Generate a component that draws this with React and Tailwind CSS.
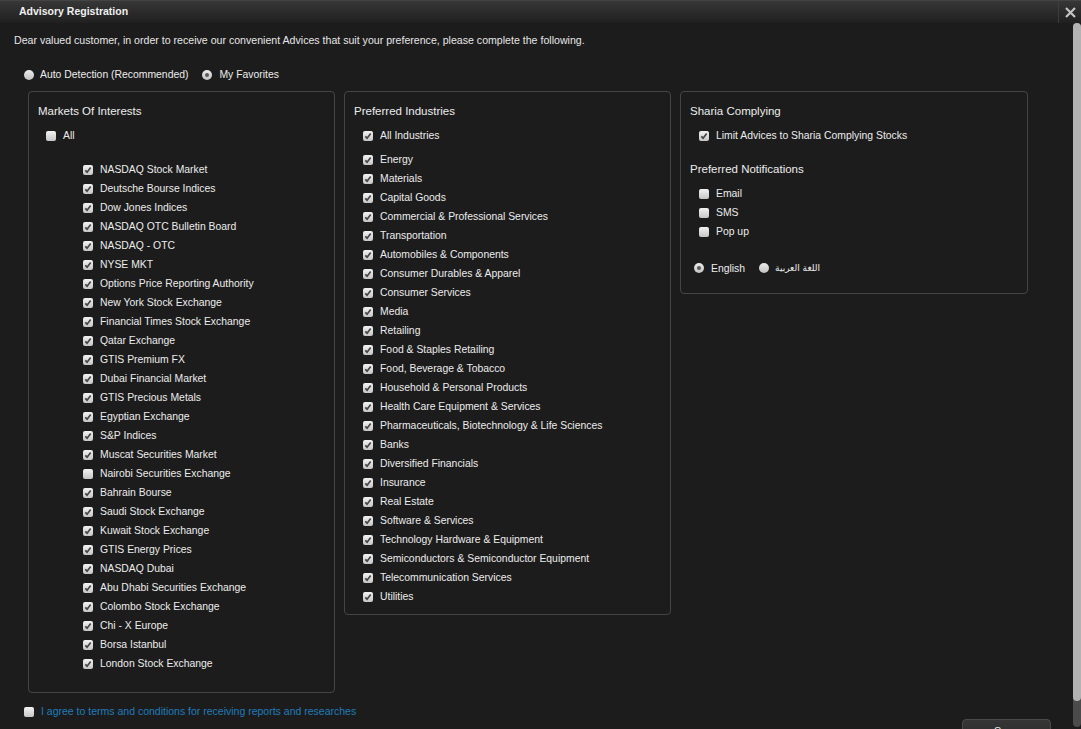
import React from 'react';

const markets = [
  ['NASDAQ Stock Market', true],
  ['Deutsche Bourse Indices', true],
  ['Dow Jones Indices', true],
  ['NASDAQ OTC Bulletin Board', true],
  ['NASDAQ - OTC', true],
  ['NYSE MKT', true],
  ['Options Price Reporting Authority', true],
  ['New York Stock Exchange', true],
  ['Financial Times Stock Exchange', true],
  ['Qatar Exchange', true],
  ['GTIS Premium FX', true],
  ['Dubai Financial Market', true],
  ['GTIS Precious Metals', true],
  ['Egyptian Exchange', true],
  ['S&P Indices', true],
  ['Muscat Securities Market', true],
  ['Nairobi Securities Exchange', false],
  ['Bahrain Bourse', true],
  ['Saudi Stock Exchange', true],
  ['Kuwait Stock Exchange', true],
  ['GTIS Energy Prices', true],
  ['NASDAQ Dubai', true],
  ['Abu Dhabi Securities Exchange', true],
  ['Colombo Stock Exchange', true],
  ['Chi - X Europe', true],
  ['Borsa Istanbul', true],
  ['London Stock Exchange', true],
];

const industries = [
  'Energy',
  'Materials',
  'Capital Goods',
  'Commercial & Professional Services',
  'Transportation',
  'Automobiles & Components',
  'Consumer Durables & Apparel',
  'Consumer Services',
  'Media',
  'Retailing',
  'Food & Staples Retailing',
  'Food, Beverage & Tobacco',
  'Household & Personal Products',
  'Health Care Equipment & Services',
  'Pharmaceuticals, Biotechnology & Life Sciences',
  'Banks',
  'Diversified Financials',
  'Insurance',
  'Real Estate',
  'Software & Services',
  'Technology Hardware & Equipment',
  'Semiconductors & Semiconductor Equipment',
  'Telecommunication Services',
  'Utilities',
];

const Check = ({ checked }) => (
  <span className="w-[10px] h-[10px] rounded-[2px] bg-linear-to-b from-[#f2f2f2] to-[#c6c6c6] flex items-center justify-center shrink-0">
    {checked && (
      <svg width="8" height="8" viewBox="0 0 8 8">
        <path d="M1.3 4.3 L3.1 6.2 L6.7 1.6" stroke="#454545" strokeWidth="1.7" fill="none" />
      </svg>
    )}
  </span>
);

const Radio = ({ checked }) => (
  <span className="w-[10px] h-[10px] rounded-full bg-linear-to-b from-[#ececec] to-[#c2c2c2] flex items-center justify-center shrink-0">
    {checked && <span className="w-[4px] h-[4px] rounded-full bg-[#5a5a5a]" />}
  </span>
);

const Row = ({ label, checked, className = '' }) => (
  <div className={`h-[19px] flex items-center gap-[7px] ${className}`}>
    <Check checked={checked} />
    <span className="text-[10.4px] text-[#ececec] whitespace-nowrap">{label}</span>
  </div>
);

const Title = ({ children, className = '' }) => (
  <div className={`h-[20px] flex items-center text-[11.5px] text-[#ececec] ${className}`}>{children}</div>
);

export default function App() {
  return (
    <div className="w-[1081px] h-[729px] overflow-hidden bg-[#1c1c1c] flex flex-col font-['Liberation_Sans',Arial,sans-serif]">
      {/* header */}
      <div className="h-[23px] shrink-0 flex items-center bg-linear-to-b from-[#373737] to-[#202020] border-t border-[#444]">
        <div className="flex-1 pl-[19px] text-[10.5px] font-bold text-[#f0f0f0]">Advisory Registration</div>
        <div className="w-[23px] h-full border-l border-[#3c3c3c] flex items-center justify-center">
          <svg width="11" height="11" viewBox="0 0 11 11">
            <path d="M1 1 L10 10 M10 1 L1 10" stroke="#c4c4c4" strokeWidth="2.2" />
          </svg>
        </div>
      </div>

      <div className="flex flex-1 min-h-0">
        <div className="flex-1 overflow-hidden pl-[14px] pt-[11px]">
          <p className="h-[14px] flex items-center text-[10.6px] text-[#e6e6e6] whitespace-nowrap">
            Dear valued customer, in order to receive our convenient Advices that suit your preference, please complete the following.
          </p>

          <div className="mt-[20px] ml-[10px] h-[14px] flex items-center text-[10.4px] text-[#ececec]">
            <Radio />
            <span className="ml-[6px]">Auto Detection (Recommended)</span>
            <span className="ml-[14px]"><Radio checked /></span>
            <span className="ml-[7px]">My Favorites</span>
          </div>

          <div className="mt-[9px] ml-[14px] flex items-start gap-[9px]">
            {/* markets */}
            <div className="w-[307px] border border-[#454545] rounded-[4px] px-[9px] pt-[10px] pb-[19px]">
              <Title>Markets Of Interests</Title>
              <Row label="All" checked={false} className="mt-[4px] ml-[8px]" />
              <div className="mt-[15px] ml-[45px]">
                {markets.map(([m, c]) => (
                  <Row key={m} label={m} checked={c} />
                ))}
              </div>
            </div>

            {/* industries */}
            <div className="w-[327px] border border-[#454545] rounded-[4px] px-[9px] pt-[10px] pb-[8px]">
              <Title>Preferred Industries</Title>
              <Row label="All Industries" checked className="mt-[4px] ml-[9px]" />
              <div className="mt-[5px] ml-[9px]">
                {industries.map((i) => (
                  <Row key={i} label={i} checked />
                ))}
              </div>
            </div>

            {/* sharia + notifications */}
            <div className="w-[348px] border border-[#454545] rounded-[4px] px-[9px] pt-[10px] pb-[16px]">
              <Title>Sharia Complying</Title>
              <Row label="Limit Advices to Sharia Complying Stocks" checked className="mt-[4px] ml-[9px]" />
              <Title className="mt-[15px]">Preferred Notifications</Title>
              <div className="mt-[4px] ml-[9px]">
                <Row label="Email" checked={false} />
                <Row label="SMS" checked={false} />
                <Row label="Pop up" checked={false} />
              </div>
              <div className="mt-[17px] ml-[4px] h-[19px] flex items-center text-[10.4px] text-[#ececec]">
                <Radio checked />
                <span className="ml-[7px] mt-[3px]">English</span>
                <span className="ml-[14px]"><Radio /></span>
                <span className="ml-[6px] mt-[2px] text-[9px] font-['DejaVu_Sans',sans-serif]" dir="rtl">اللغة العربية</span>
              </div>
            </div>
          </div>

          <div className="mt-[12px] ml-[10px] h-[14px] flex items-center gap-[7px]">
            <Check checked={false} />
            <span className="text-[10.5px] text-[#1f7dbd] whitespace-nowrap">
              I agree to terms and conditions for receiving reports and researches
            </span>
          </div>

          <div className="flex justify-end pr-[22px]">
            <button className="w-[89px] h-[26px] pt-[5px] leading-[12px] flex justify-center items-start rounded-[4px] border border-[#4a4a4a] bg-linear-to-b from-[#363636] to-[#2a2a2a] text-[11px] text-[#eee]">
              Save
            </button>
          </div>
        </div>

        {/* scrollbar */}
        <div className="w-[8px] shrink-0 flex flex-col pb-[2px]">
          <div className="flex-1 rounded-full bg-[#4b4b4b] flex flex-col">
            <div className="h-[678px] rounded-full bg-[#b3b3b3]" />
          </div>
        </div>
      </div>
    </div>
  );
}
